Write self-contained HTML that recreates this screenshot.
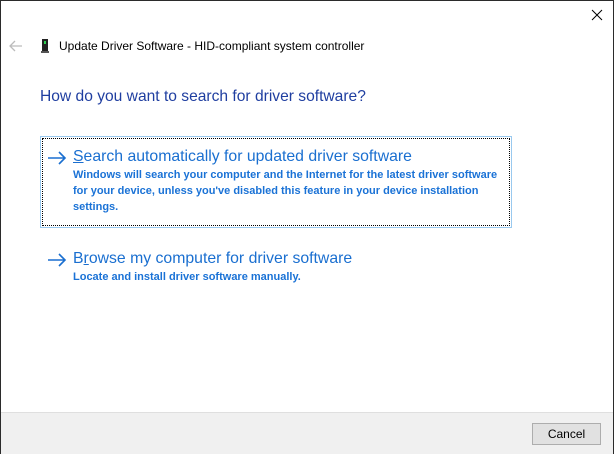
<!DOCTYPE html>
<html><head><style>
body{margin:0;width:614px;height:454px;overflow:hidden;background:#fff;font-family:"Liberation Sans",sans-serif;}
.win{position:absolute;left:0;top:0;width:612px;height:452px;border:1px solid #2b2b2b;background:#fff;}
.abs{position:absolute;white-space:nowrap;}
.t{font-size:12px;color:#000;}
.h{font-size:15.6px;color:#1f3ea0;}
.ot{font-size:15.8px;color:#1a6fd0;}
.od{font-size:11px;font-weight:bold;color:#1a72d6;line-height:16px;}
.footer{position:absolute;left:0;top:411px;width:612px;height:41px;background:#f0f0f0;border-top:1px solid #dfdfdf;}
.btn{position:absolute;left:531px;top:10px;width:67px;height:20px;border:1px solid #adadad;background:#e1e1e1;font-size:12px;text-align:center;line-height:20px;}
</style></head><body>
<div class="win">
<svg class="abs" style="left:589px;top:7px" width="14" height="14"><path d="M2 2L12 12M12 2L2 12" stroke="#000" stroke-width="1"/></svg>
<svg class="abs" style="left:8px;top:39px" width="14" height="12"><path d="M1 6H13M6 1L1 6L6 11" stroke="#bcbcbc" stroke-width="1.3" fill="none"/></svg>
<svg class="abs" style="left:40px;top:38px" width="8" height="15"><rect x="1" y="0" width="6" height="13" fill="#222"/><rect x="0" y="12" width="8" height="2" fill="#555"/><rect x="3" y="2" width="2" height="3" fill="#2bd050"/></svg>
<div class="abs t" style="left:58px;top:38px">Update Driver Software - HID-compliant system controller</div>
<div class="abs h" style="left:39px;top:87px">How do you want to search for driver software?</div>
<div class="abs" style="left:39px;top:135px;width:470px;height:90px;border:1px solid #99c9ef;"></div>
<div class="abs" style="left:41px;top:137px;width:466px;height:86px;border:1px dotted #000;"></div>
<svg class="abs" style="left:46px;top:150px" width="20" height="14"><path d="M1 7H18M12 1L18 7L12 13" stroke="#1a6fd0" stroke-width="1.6" fill="none"/></svg>
<div class="abs ot" style="left:72px;top:147px"><u>S</u>earch automatically for updated driver software</div>
<div class="abs od" style="left:72px;top:166px">Windows will search your computer and the Internet for the latest driver software<br>for your device, unless you've disabled this feature in your device installation<br>settings.</div>
<svg class="abs" style="left:46px;top:252px" width="20" height="14"><path d="M1 7H18M12 1L18 7L12 13" stroke="#1a6fd0" stroke-width="1.6" fill="none"/></svg>
<div class="abs ot" style="left:72px;top:249px">B<u>r</u>owse my computer for driver software</div>
<div class="abs od" style="left:72px;top:268px">Locate and install driver software manually.</div>
<div class="footer"><div class="btn">Cancel</div></div>
</div>
</body></html>
